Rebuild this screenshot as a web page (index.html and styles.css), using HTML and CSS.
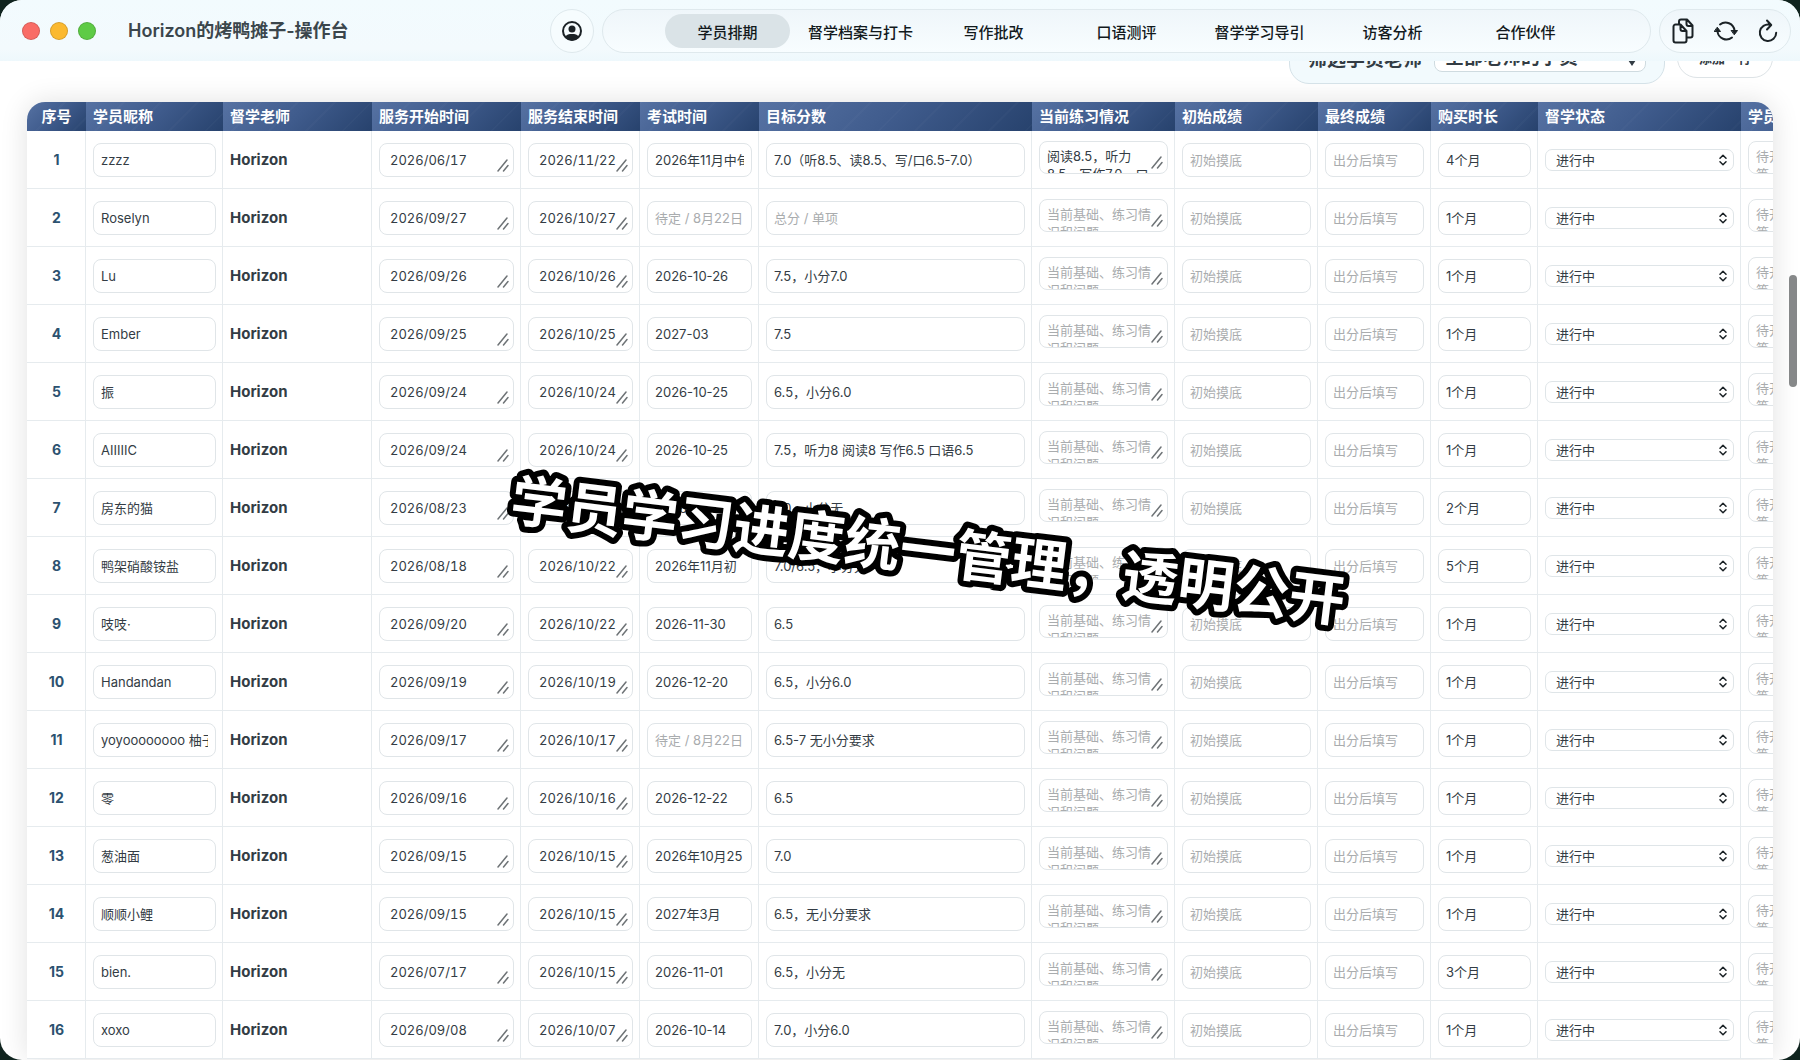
FILE: index.html
```html
<!DOCTYPE html>
<html lang="zh-CN">
<head>
    <meta charset="UTF-8">
    <meta name="viewport" content="width=device-width, initial-scale=1.0">
    <title>Horizon的烤鸭摊子-操作台</title>
    <link rel="stylesheet" href="styles.css">
</head>
<body>
    <svg class="sprite" aria-hidden="true">
        <symbol id="grip" viewBox="0 0 12 13">
            <path d="M1 12L10 1M6.500 12L11 6.500" />
        </symbol>
        <symbol id="updown" viewBox="0 0 8 12">
            <path d="M1 4.200l3-3 3 3M1 7.800l3 3 3-3" />
        </symbol>
    </svg>
    <div class="window">
        <header class="titlebar">
            <div class="lights">
                <span class="light red"></span>
                <span class="light yellow"></span>
                <span class="light green"></span>
            </div>
            <h1 class="title">Horizon的烤鸭摊子-操作台</h1>
            <button class="profile" aria-label="账号">
                <svg width="22" height="22" viewBox="0 0 22 22">
                    <circle cx="11" cy="11" r="9" fill="none" stroke="#1b2226" stroke-width="2" />
                    <circle cx="11" cy="9" r="3.500" fill="#1b2226" />
                    <path d="M4 17c1.500-2.500 4-3 7-3s5.500.5 7 3c-2 2.500-4.500 3.500-7 3.500s-5-1-7-3.500z" />
                </svg>
            </button>
            <nav class="tabs">
                <button class="tab active">学员排期</button>
                <button class="tab">督学档案与打卡</button>
                <button class="tab">写作批改</button>
                <button class="tab">口语测评</button>
                <button class="tab">督学学习导引</button>
                <button class="tab">访客分析</button>
                <button class="tab">合作伙伴</button>
            </nav>
            <div class="tools">
                <button class="tool" aria-label="复制">
                    <svg width="22" height="26" viewBox="0 0 22 26">
                        <path d="M7 6V3.500A2 2 0 0 1 9 1.500h6l5.500 6v10a2 2 0 0 1-2 2H15M14.500 1.500v4.500a2 2 0 0 0 2 2h4" />
                        <path d="M3.500 6.500h5l6 6.500v9.500a2 2 0 0 1-2 2h-9a2 2 0 0 1-2-2v-14a2 2 0 0 1 2-2zM8.500 6.500v4.500a2 2 0 0 0 2 2h4" />
                    </svg>
                </button>
                <button class="tool" aria-label="同步">
                    <svg width="24" height="22" viewBox="0 0 24 22">
                        <path d="M6 4.500a9 9 0 0 1 14.500 6M18 17.500A9 9 0 0 1 3.500 11.500" />
                        <path class="solid" d="M17.500 10.500h6l-3 4zM.5 11.500h6l-3-4z" />
                    </svg>
                </button>
                <button class="tool" aria-label="刷新">
                    <svg width="20" height="24" viewBox="0 0 20 24">
                        <path d="M12 5.800a8.200 8.200 0 1 0 6.200 8M9 1.500l4.200 4.500-4.200 4.500" />
                    </svg>
                </button>
            </div>
        </header>

        <main class="page">
            <div class="toolbar">
                <div class="filter">
                    <label for="teacher">筛选学员老师</label>
                    <select id="teacher">
                        <option>全部老师的学员</option>
                    </select>
                    <svg class="caret" width="8" height="6" viewBox="0 0 8 6"><path d="M0 0h8L4 6z" /></svg>
                </div>
                <button class="add-row">添加一行</button>
            </div>
            <div class="sheet">
                <table>
                    <colgroup>
                        <col class="c-no"><col class="c-name"><col class="c-teacher"><col class="c-start">
                        <col class="c-end"><col class="c-exam"><col class="c-goal"><col class="c-practice">
                        <col class="c-first"><col class="c-final"><col class="c-term"><col class="c-status"><col class="c-note">
                    </colgroup>
                    <thead>
                        <tr>
                            <th>序号</th>
                            <th>学员昵称</th>
                            <th>督学老师</th>
                            <th>服务开始时间</th>
                            <th>服务结束时间</th>
                            <th>考试时间</th>
                            <th>目标分数</th>
                            <th>当前练习情况</th>
                            <th>初始成绩</th>
                            <th>最终成绩</th>
                            <th>购买时长</th>
                            <th>督学状态</th>
                            <th>学员反馈</th>
                        </tr>
                    </thead>
                    <tbody id="rows"></tbody>
                </table>
            </div>
        </main>
        <div class="scroll-thumb"></div>
        <svg class="caption" width="900" height="100" viewBox="0 0 900 100">
            <text x="450" y="70" text-anchor="middle">学员学习进度统一管理，透明公开</text>
        </svg>
    </div>
    <script src="app.js"></script>
</body>
</html>
```
FILE: styles.css
```css
* {
    box-sizing: border-box;
}
body {
    margin: 0;
    background: #10241f;
    color: #333c44;
    font-family: Inter, "Noto Sans CJK SC", sans-serif;
    font-size: 13px;
}
button, input, select, textarea {
    font-family: inherit;
    color: inherit;
}
svg path {
    fill: none;
    stroke: #1b2226;
    stroke-width: 2;
    stroke-linecap: round;
    stroke-linejoin: round;
}
.sprite {
    display: none;
}
.window {
    position: relative;
    display: flex;
    flex-direction: column;
    height: 100vh;
    border-radius: 22px;
    overflow: hidden;
    background: #fff;
}

/* title bar */
.titlebar {
    display: flex;
    align-items: center;
    gap: 8px;
    padding: 9px 9px 8px 22px;
    background: linear-gradient(#f2fbfe, #f3fafd 80%, #eef8fc);
    position: relative;
    z-index: 1;
}
.lights {
    display: flex;
    gap: 10px;
}
.light {
    width: 18px;
    height: 18px;
    border-radius: 50%;
    border: 1px solid rgba(0, 0, 0, 0.15);
}
.red {
    background: #f96c66;
}
.yellow {
    background: #fbb92f;
}
.green {
    background: #5ecb45;
}
.title {
    flex: 1;
    margin: 0 0 0 24px;
    font-size: 18px;
    font-weight: 600;
    line-height: 24px;
    color: #3b464c;
    white-space: nowrap;
}
.profile, .tabs, .tools {
    flex: none;
    height: 44px;
    border: 1px solid #dfe9ed;
    border-radius: 22px;
    background: linear-gradient(#eff6fa, #f8fdff);
}
.profile {
    display: flex;
    align-items: center;
    justify-content: center;
    width: 44px;
    padding: 0;
    background: #f6fcfe;
}
.profile path {
    fill: #1b2226;
    stroke: none;
}
.tabs {
    display: flex;
    align-items: center;
    justify-content: center;
    gap: 8px;
    width: calc(100% - 720px);
}
.tab {
    width: 125px;
    height: 34px;
    padding: 0;
    border: none;
    border-radius: 17px;
    background: transparent;
    font-size: 15px;
    font-weight: 500;
    color: #12191c;
    white-space: nowrap;
}
.tab.active {
    background: #dae3e7;
}
.tools {
    display: flex;
    align-items: center;
    justify-content: space-between;
    width: 132px;
    padding: 0 12px;
}
.tool {
    display: flex;
    padding: 0;
    border: none;
    background: none;
}
.tool .solid {
    fill: #1b2226;
    stroke-width: 1;
}

/* filter bar, scrolled half under the title bar */
.page {
    flex: 1;
    min-height: 0;
    padding: 0 27px;
    overflow: hidden;
}
.toolbar {
    display: flex;
    justify-content: flex-end;
    align-items: center;
    gap: 12px;
    margin-top: -30px;
    margin-bottom: 18px;
}
.filter {
    position: relative;
    display: flex;
    align-items: center;
    gap: 12px;
    height: 53px;
    padding: 0 18px;
    border: 1px solid #d5e2e8;
    border-radius: 20px;
    background: #f2fafd;
    font-size: 19px;
    font-weight: 600;
}
.filter select {
    appearance: none;
    width: 212px;
    height: 28px;
    padding: 0 10px;
    border: 1px solid #cfdbe0;
    border-radius: 8px;
    background: #fff;
    font-size: 19px;
    font-weight: 600;
}
.filter .caret {
    position: absolute;
    top: 28px;
    right: 28px;
}
.caret path {
    fill: #333c44;
    stroke: none;
}
.add-row {
    width: 96px;
    height: 40px;
    border: 1px solid #dde3e6;
    border-radius: 20px;
    background: #fff;
    font-size: 13px;
    font-weight: 600;
}

/* table */
.sheet {
    border-radius: 18px 18px 0 0;
    overflow: hidden;
    box-shadow: 0 0 28px rgba(0, 0, 0, 0.12);
}
table {
    width: 1857px;
    border-collapse: separate;
    border-spacing: 0;
    table-layout: fixed;
    background: #fff;
}
.c-no { width: 59px; }
.c-name { width: 137px; }
.c-teacher, .c-start { width: 149px; }
.c-end, .c-exam { width: 119px; }
.c-goal { width: 273px; }
.c-practice, .c-first, .c-note { width: 143px; }
.c-final { width: 113px; }
.c-term { width: 107px; }
.c-status { width: 203px; }
th {
    height: 29px;
    padding: 0 7px;
    background:
        repeating-linear-gradient(135deg, rgba(255, 255, 255, 0.02) 0 2px, transparent 2px 26px),
        linear-gradient(135deg, #5672a3, #3f5b8c 50%, #27426d);
    color: #fff;
    font-size: 15px;
    font-weight: 700;
    line-height: 20px;
    text-align: left;
    white-space: nowrap;
}
td {
    height: 58px;
    padding: 0 6px 0 7px;
    border-right: 1px solid #e6ebee;
    border-bottom: 1px solid #e6ebee;
    vertical-align: middle;
}
th:first-child, .no {
    text-align: center;
}
.no {
    color: #2c5270;
    font-size: 14px;
    font-weight: 700;
}
.teacher {
    font-size: 15px;
    font-weight: 700;
}
.field {
    position: relative;
    display: flex;
}
.field input, .field textarea {
    width: 100%;
    height: 34px;
    padding: 0 7px;
    border: 1px solid #e0e5e8;
    border-radius: 8px;
    background: #fff;
    font-size: 13px;
}
.field .date {
    padding: 0 10px;
    font-variant-numeric: tabular-nums;
}
.field textarea {
    height: 33px;
    margin-bottom: 4px;
    padding: 5px 7px 0;
    line-height: 18px;
    resize: none;
    overflow: hidden;
}
.field select {
    appearance: none;
    width: 100%;
    height: 22px;
    padding: 0 10px;
    border: 1px solid #dfe5e8;
    border-radius: 7px;
    background: #fff;
    font-size: 13px;
}
::placeholder {
    color: #a9acae;
}
.grip, .updown {
    position: absolute;
    pointer-events: none;
}
.grip {
    right: 5px;
    bottom: 5px;
    width: 12px;
    height: 13px;
}
textarea + .grip {
    bottom: 9px;
}
.updown {
    top: 5px;
    right: 7px;
    width: 8px;
    height: 12px;
}
#grip path {
    stroke: #6e7376;
    stroke-width: 1.5;
}
#updown path {
    stroke-width: 1.5;
}

.scroll-thumb {
    position: absolute;
    top: 275px;
    right: 3px;
    width: 8px;
    height: 112px;
    border-radius: 4px;
    background: #868889;
}
.caption {
    position: absolute;
    top: 551px;
    left: 928px;
    transform: translate(-50%, -50%) rotate(7deg);
    overflow: visible;
    pointer-events: none;
}
.caption text {
    fill: #fff;
    stroke: #000;
    stroke-width: 12px;
    stroke-linejoin: round;
    paint-order: stroke;
    font-size: 56px;
    font-weight: 700;
}
```
FILE: app.js
```js
// name, start, end, exam, goal, term, practice
const students = [
    ["zzzz", "2026/06/17", "2026/11/22", "2026年11月中旬", "7.0（听8.5、读8.5、写/口6.5-7.0）", "4个月", "阅读8.5，听力8.5，写作7.0，口语6.5"],
    ["Roselyn", "2026/09/27", "2026/10/27", "", "", "1个月"],
    ["Lu", "2026/09/26", "2026/10/26", "2026-10-26", "7.5，小分7.0", "1个月"],
    ["Ember", "2026/09/25", "2026/10/25", "2027-03", "7.5", "1个月"],
    ["振", "2026/09/24", "2026/10/24", "2026-10-25", "6.5，小分6.0", "1个月"],
    ["AIIIIIC", "2026/09/24", "2026/10/24", "2026-10-25", "7.5，听力8 阅读8 写作6.5 口语6.5", "1个月"],
    ["房东的猫", "2026/08/23", "2026/10/23", "2026-10-24", "7.0，小分无", "2个月"],
    ["鸭架硝酸铵盐", "2026/08/18", "2026/10/22", "2026年11月初", "7.0/6.5，小分无", "5个月"],
    ["吱吱·", "2026/09/20", "2026/10/22", "2026-11-30", "6.5", "1个月"],
    ["Handandan", "2026/09/19", "2026/10/19", "2026-12-20", "6.5，小分6.0", "1个月"],
    ["yoyoooooooo 柚子", "2026/09/17", "2026/10/17", "", "6.5-7 无小分要求", "1个月"],
    ["零", "2026/09/16", "2026/10/16", "2026-12-22", "6.5", "1个月"],
    ["葱油面", "2026/09/15", "2026/10/15", "2026年10月25", "7.0", "1个月"],
    ["顺顺小鲤", "2026/09/15", "2026/10/15", "2027年3月", "6.5，无小分要求", "1个月"],
    ["bien.", "2026/07/17", "2026/10/15", "2026-11-01", "6.5，小分无", "3个月"],
    ["xoxo", "2026/09/08", "2026/10/07", "2026-10-14", "7.0，小分6.0", "1个月"]
];

const grip = '<svg class="grip"><use href="#grip"/></svg>';

function input(label, value, placeholder = "") {
    return `<td><div class="field"><input type="text" aria-label="${label}" value="${value}" placeholder="${placeholder}"></div></td>`;
}

function date(label, value) {
    return `<td><div class="field"><input class="date" type="text" aria-label="${label}" value="${value}">${grip}</div></td>`;
}

function area(label, value, placeholder) {
    return `<td><div class="field"><textarea aria-label="${label}" placeholder="${placeholder}">${value}</textarea>${grip}</div></td>`;
}

document.getElementById("rows").innerHTML = students.map(([name, start, end, exam, goal, term, practice = ""], i) => `
    <tr>
        <td class="no">${i + 1}</td>
        ${input("学员昵称", name)}
        <td class="teacher">Horizon</td>
        ${date("服务开始时间", start)}
        ${date("服务结束时间", end)}
        ${input("考试时间", exam, "待定 / 8月22日")}
        ${input("目标分数", goal, "总分 / 单项")}
        ${area("当前练习情况", practice, "当前基础、练习情况和问题")}
        ${input("初始成绩", "", "初始摸底")}
        ${input("最终成绩", "", "出分后填写")}
        ${input("购买时长", term)}
        <td><div class="field"><select aria-label="督学状态"><option>进行中</option></select><svg class="updown"><use href="#updown"/></svg></div></td>
        ${area("学员反馈", "", "待开始、跟进反馈等")}
    </tr>`).join("");
```
